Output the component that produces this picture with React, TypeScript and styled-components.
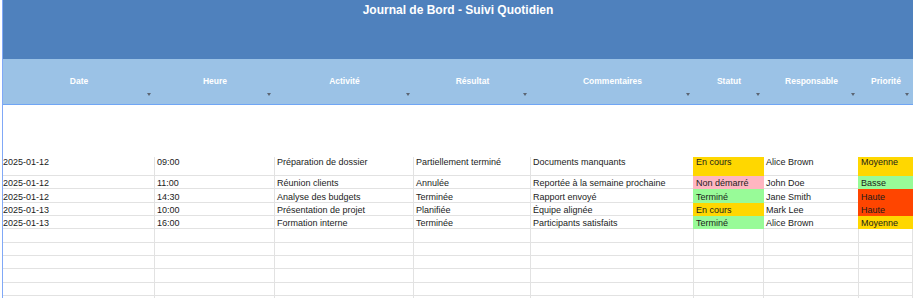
import React from 'react';
import styled, { createGlobalStyle } from 'styled-components';

type Fill = 'yellow' | 'pink' | 'green' | 'red';

interface Entry {
  date: string;
  time: string;
  activity: string;
  result: string;
  comment: string;
  status: string;
  statusFill: Fill;
  owner: string;
  priority: string;
  priorityFill: Fill;
}

const fills: Record<Fill, string> = {
  yellow: '#ffd700',
  pink: '#ffb6c1',
  green: '#98fb98',
  red: '#ff4500',
};

const columns = ['Date', 'Heure', 'Activité', 'Résultat', 'Commentaires', 'Statut', 'Responsable', 'Priorité'];

const entries: Entry[] = [
  {
    date: '2025-01-12',
    time: '09:00',
    activity: 'Préparation de dossier',
    result: 'Partiellement terminé',
    comment: 'Documents manquants',
    status: 'En cours',
    statusFill: 'yellow',
    owner: 'Alice Brown',
    priority: 'Moyenne',
    priorityFill: 'yellow',
  },
  {
    date: '2025-01-12',
    time: '11:00',
    activity: 'Réunion clients',
    result: 'Annulée',
    comment: 'Reportée à la semaine prochaine',
    status: 'Non démarré',
    statusFill: 'pink',
    owner: 'John Doe',
    priority: 'Basse',
    priorityFill: 'green',
  },
  {
    date: '2025-01-12',
    time: '14:30',
    activity: 'Analyse des budgets',
    result: 'Terminée',
    comment: 'Rapport envoyé',
    status: 'Terminé',
    statusFill: 'green',
    owner: 'Jane Smith',
    priority: 'Haute',
    priorityFill: 'red',
  },
  {
    date: '2025-01-13',
    time: '10:00',
    activity: 'Présentation de projet',
    result: 'Planifiée',
    comment: 'Équipe alignée',
    status: 'En cours',
    statusFill: 'yellow',
    owner: 'Mark Lee',
    priority: 'Haute',
    priorityFill: 'red',
  },
  {
    date: '2025-01-13',
    time: '16:00',
    activity: 'Formation interne',
    result: 'Terminée',
    comment: 'Participants satisfaits',
    status: 'Terminé',
    statusFill: 'green',
    owner: 'Alice Brown',
    priority: 'Moyenne',
    priorityFill: 'yellow',
  },
];

const BLANK_ROWS = 6;

const App = () => (
  <>
    <GlobalStyle />
    <Sheet>
      <TitleBar>Journal de Bord - Suivi Quotidien</TitleBar>
      <HeaderRow>
        {columns.map((label) => (
          <HeaderCell key={label}>
            {label}
            <FilterArrow />
          </HeaderCell>
        ))}
      </HeaderRow>
      <Spacer />
      {entries.map((entry, index) => (
        <Row key={index} $first={index === 0}>
          <Cell>{entry.date}</Cell>
          <Cell>{entry.time}</Cell>
          <Cell>{entry.activity}</Cell>
          <Cell>{entry.result}</Cell>
          <Cell>{entry.comment}</Cell>
          <Cell $fill={fills[entry.statusFill]}>{entry.status}</Cell>
          <Cell>{entry.owner}</Cell>
          <Cell $fill={fills[entry.priorityFill]}>{entry.priority}</Cell>
        </Row>
      ))}
      {Array.from({ length: BLANK_ROWS }).map((_, index) => (
        <Row key={`blank-${index}`}>
          {columns.map((label) => (
            <Cell key={label} />
          ))}
        </Row>
      ))}
    </Sheet>
  </>
);

export default App;

const GlobalStyle = createGlobalStyle`
  html, body {
    margin: 0;
    padding: 0;
    background: #ffffff;
  }
  body {
    font-family: 'Liberation Sans', Arial, sans-serif;
    overflow: hidden;
  }
`;

const GRID = '152px 120px 139px 117px 163px 70px 95px 1fr';

const Sheet = styled.div`
  margin-left: 2px;
  height: 298px;
  overflow: hidden;
  border-left: 1px solid #80a8f7;
`;

const TitleBar = styled.div`
  height: 59px;
  box-sizing: border-box;
  padding-top: 3px;
  background: #4f81bd;
  color: #ffffff;
  font-size: 12px;
  font-weight: 700;
  text-align: center;
`;

const HeaderRow = styled.div`
  display: grid;
  grid-template-columns: ${GRID};
  height: 46px;
  box-sizing: border-box;
  background: #9bc2e6;
  border-bottom: 1px solid #6fa5f4;
`;

const HeaderCell = styled.div`
  position: relative;
  display: flex;
  align-items: center;
  justify-content: center;
  padding-bottom: 1px;
  color: #ffffff;
  font-size: 8.5px;
  font-weight: 700;
`;

const FilterArrow = styled.span`
  position: absolute;
  right: 4px;
  bottom: 8px;
  width: 0;
  height: 0;
  border-left: 2.5px solid transparent;
  border-right: 2.5px solid transparent;
  border-top: 3px solid #5b6573;
`;

const Spacer = styled.div`
  height: 52px;
`;

const Row = styled.div<{ $first?: boolean }>`
  display: grid;
  grid-template-columns: ${GRID};
  height: ${({ $first }) => ($first ? '19px' : '13.333px')};
  align-items: stretch;
  & > div {
    align-items: ${({ $first }) => ($first ? 'flex-start' : 'flex-end')};
  }
  & > div:first-child {
    padding-left: 0;
  }
`;

const Cell = styled.div<{ $fill?: string }>`
  display: flex;
  box-sizing: border-box;
  min-width: 0;
  padding: 0 2px;
  overflow: hidden;
  white-space: nowrap;
  font-size: 9px;
  line-height: 10px;
  color: #1b1b1b;
  background: ${({ $fill }) => $fill ?? 'transparent'};
  border-right: 1px solid ${({ $fill }) => $fill ?? '#e2e2e2'};
  border-bottom: 1px solid ${({ $fill }) => $fill ?? '#e2e2e2'};
  box-shadow: ${({ $fill }) => ($fill ? `-1px 0 0 ${$fill}` : 'none')};
`;
